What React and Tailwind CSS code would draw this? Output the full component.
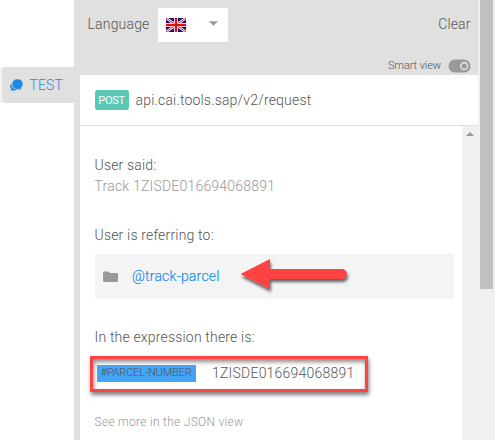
function ChatIcon() {
  return (
    <svg width="13" height="12" viewBox="0 0 13 12" className="block shrink-0">
      <path d="M0.3 11.5 1.3 9.8A4.2 4.2 0 0 1 1.4 4.2 5.6 5.6 0 0 0 7.3 10.6 5 5 0 0 1 3 11.4Z" fill="#1e88e5" />
      <path d="M7 0.2a5 5 0 1 1-1.2 9.6A4.9 4.9 0 0 1 7 0.2ZM9.5 9l2.6 1.8-3.8-.5Z" fill="#1e88e5" />
    </svg>
  );
}

function Flag() {
  return (
    <svg width="20" height="14" viewBox="0 0 20 14" className="block shrink-0">
      <rect width="20" height="14" fill="#10107c" />
      <path d="M0 0 20 14M20 0 0 14" stroke="#fff" strokeWidth="2.6" />
      <path d="M0 0 20 14M20 0 0 14" stroke="#e0161c" strokeWidth="1" />
      <path d="M10 0V14M0 7H20" stroke="#fff" strokeWidth="4" />
      <path d="M10 0V14M0 7H20" stroke="#dc1116" strokeWidth="2.4" />
    </svg>
  );
}

function Toggle() {
  return (
    <svg width="23" height="14" viewBox="0 0 23 14" className="block">
      <rect x="0.5" y="0.4" width="22" height="13.2" rx="6.6" fill="#999" />
      <circle cx="16.2" cy="7" r="3.4" fill="none" stroke="#e0e0e0" strokeWidth="1.6" />
    </svg>
  );
}

function Arrow() {
  return (
    <svg width="120" height="44" viewBox="0 0 120 44" className="absolute left-[144px] top-0 overflow-visible">
      <defs>
        <filter id="arrowShadow" x="-10%" y="-20%" width="120%" height="160%">
          <feDropShadow dx="1" dy="3" stdDeviation="1.8" floodColor="#000" floodOpacity="0.6" />
        </filter>
      </defs>
      <path
        d="M1.5 20 31 5V15H103a5 5 0 0 1 0 10H31V35Z"
        fill="#ff4343"
        filter="url(#arrowShadow)"
      />
    </svg>
  );
}

export default function App() {
  return (
    <div className="flex h-[440px] w-[495px] overflow-hidden bg-white font-['Roboto',sans-serif] text-[14px] font-light leading-[20px] tracking-[0.18px] text-[#555]">
      <aside className="w-[74px] shrink-0 pt-[67px]">
        <div className="bg-[#f3f3f3] pl-[1.5px]">
          <div className="flex h-[36px] items-center rounded-l-[4px] bg-[#e0e0e0] pl-[8.5px] text-[#1e88e5]">
            <ChatIcon />
            <span className="ml-[6.5px] tracking-[0.1px]">TEST</span>
          </div>
        </div>
      </aside>

      <main className="w-[404px] shrink-0 bg-[#e0e0e0] pl-[6px]">
        <header className="flex h-[75px] flex-col">
          <div className="flex h-[50px] items-center pl-[7.5px] pr-[7.5px]">
            <span className="mt-[-2px] w-[70px]">Language</span>
            <div className="flex h-[34px] w-[70px] items-center bg-white pl-[8.5px] pr-[10px]">
              <Flag />
              <svg width="9" height="5" viewBox="0 0 9 5" className="mb-[3px] ml-auto">
                <path d="M0 0.2H9L4.5 4.8Z" fill="#999" />
              </svg>
            </div>
            <span className="ml-auto mt-[-2px] tracking-[0.1px]">Clear</span>
          </div>
          <div className="flex h-[25px] items-center justify-end pr-[7px] pt-[6px] text-[11px] tracking-[-0.1px]">
            <span className="mr-[7px]">Smart view</span>
            <Toggle />
          </div>
        </header>

        <div className="flex h-[51px] items-center border-b border-[#e0e0e0] bg-white pl-[14.5px]">
          <span className="flex h-[20px] w-[34px] items-center justify-center rounded-[3px] bg-[#5bc7b5] pt-px text-[11px] font-normal tracking-[-0.3px] text-white">
            POST
          </span>
          <span className="ml-[7px]">api.cai.tools.sap/v2/request</span>
        </div>

        <div className="flex h-[314px] bg-white">
          <section className="w-[382px] shrink-0 pl-[14.5px] pt-[29px]">
            <div className="leading-[21px]">
              <p>User said:</p>
              <p className="tracking-[0.2px] text-[#999]">Track 1ZISDE016694068891</p>
            </div>
            <p className="mt-[28px] leading-[21px]">User is referring to:</p>
            <div className="relative mt-[8px] flex h-[45px] w-[359px] items-center bg-[#f4f4f4] pl-[8px]">
              <svg width="15" height="12" viewBox="0 0 15 12">
                <path d="M1.5 0.5H5.5L7 2H13.5Q15 2 15 3.5V9.5Q15 11 13.5 11H1.5Q0 11 0 9.5V2Q0 0.5 1.5 0.5Z" fill="#999" />
              </svg>
              <span className="ml-[14.5px] mt-[-1px] tracking-[0.22px] text-[#1e90f0] [-webkit-text-stroke:0.2px_#1e90f0]">@track-parcel</span>
              <Arrow />
            </div>
            <p className="mt-[28px] leading-[21px]">In the expression there is:</p>
            <div className="ml-[-4.5px] mt-[8px] flex h-[36px] w-[278px] border-[3px] border-[#ff4343] pl-[3.5px] pt-[6px] shadow-[1px_3px_4px_rgba(0,0,0,0.5),inset_1px_3px_4px_rgba(0,0,0,0.45)]">
              <span className="flex h-[17px] w-[99px] shrink-0 items-center justify-center whitespace-nowrap bg-[#42a5f5] pb-[2px] text-[11px] tracking-[-0.15px]">
                #PARCEL-NUMBER
              </span>
              <span className="ml-[16.5px] leading-[17px] tracking-[0.22px]">1ZISDE016694068891</span>
            </div>
            <p className="mt-[20px] text-[12px] tracking-[0.29px] text-[#999]">See more in the JSON view</p>
          </section>
          <div className="flex flex-1 justify-center bg-[#f0f0f0] pt-[6px]">
            <svg width="8" height="4" viewBox="0 0 8 4">
              <path d="M0 4H8L4 0Z" fill="#999" />
            </svg>
          </div>
        </div>
      </main>

      <div className="w-[17px] bg-[#f0f0f0] pl-[2px]">
        <div className="h-[289px] w-[13px] bg-[#c1c1c1]" />
      </div>
    </div>
  );
}
